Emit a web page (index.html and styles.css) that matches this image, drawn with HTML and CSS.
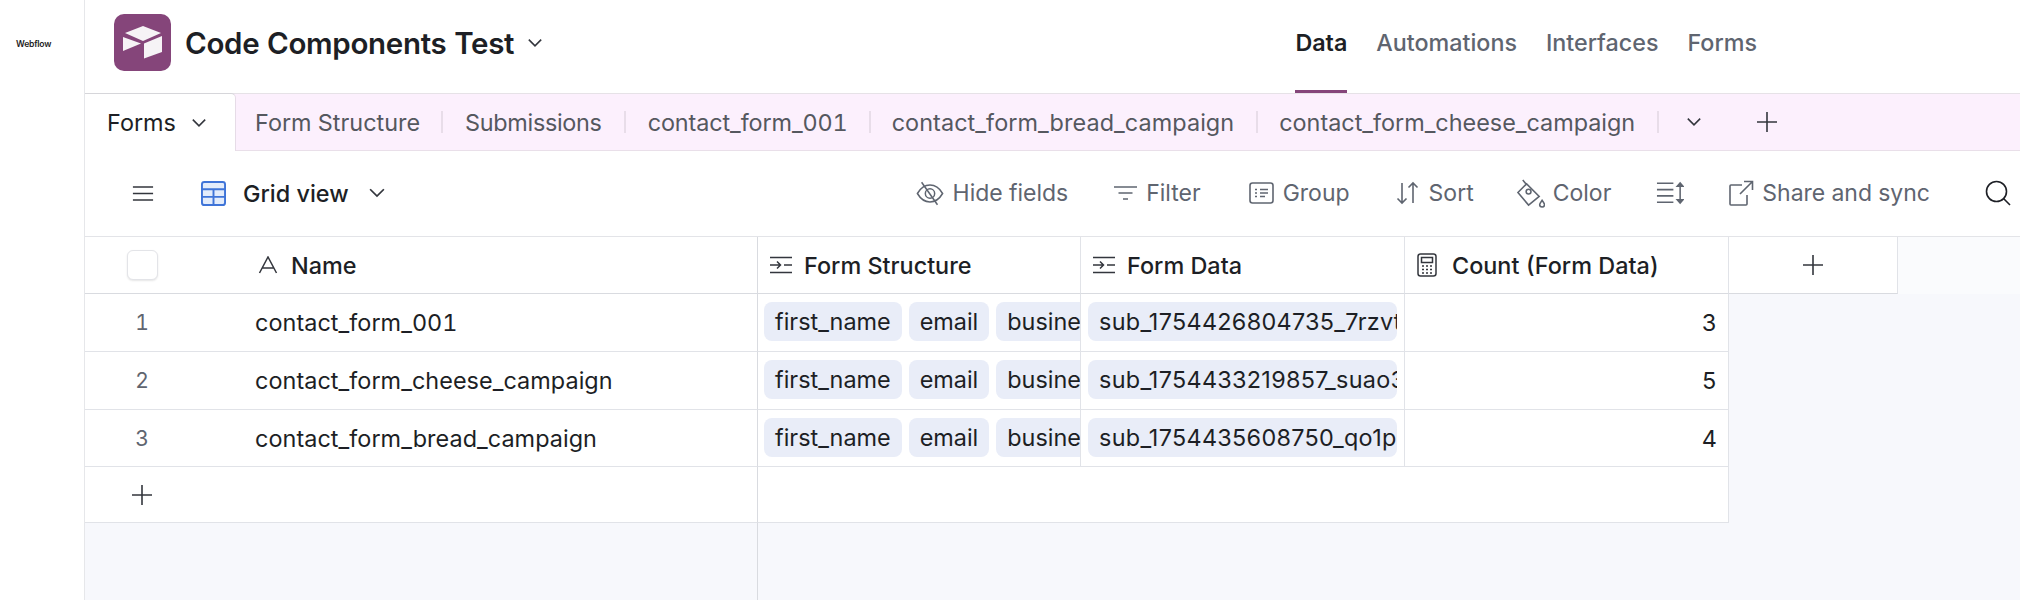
FILE: index.html
```html
<!DOCTYPE html>
<html lang="en">
<head>
<meta charset="utf-8">
<title>Code Components Test</title>
<link rel="stylesheet" href="styles.css">
</head>
<body>
<aside class="rail"><span class="rail-logo">Webflow</span></aside>
<main class="app">
  <header class="topbar">
    <div class="base">
      <svg class="base-tile" viewBox="0 0 57 57"><rect width="57" height="57" rx="10" fill="#85457a"/><path d="M11 19 29 12l18 7-18 8z" fill="#f6f3f6"/><path d="M9 23l18 6.500L9 37z" fill="#f6f3f6"/><path d="M30 29.500 48 22v16l-18 6.500z" fill="#f6f3f6"/></svg>
      <h1 class="base-name">Code Components Test</h1>
      <svg class="chev base-chev" viewBox="0 0 16 16"><path d="M2.500 5 8 10.500 13.500 5"/></svg>
    </div>
    <nav class="nav">
      <a class="nav-item is-active">Data</a>
      <a class="nav-item">Automations</a>
      <a class="nav-item">Interfaces</a>
      <a class="nav-item">Forms</a>
    </nav>
  </header>

  <div class="tabbar">
    <div class="tab-active">Forms<svg class="chev" viewBox="0 0 16 16"><path d="M2.500 5 8 10.500 13.500 5"/></svg></div>
    <div class="tab">Form Structure</div><i class="tab-sep"></i>
    <div class="tab tab-tight">Submissions</div><i class="tab-sep"></i>
    <div class="tab tab-short">contact_form_001</div><i class="tab-sep"></i>
    <div class="tab tab-bread">contact_form_bread_campaign</div><i class="tab-sep"></i>
    <div class="tab tab-cheese">contact_form_cheese_campaign</div><i class="tab-sep"></i>
    <svg class="chev tab-more" viewBox="0 0 16 16"><path d="M2.500 5 8 10.500 13.500 5"/></svg>
    <svg class="plus tab-plus" viewBox="0 0 22 22"><path d="M11 1v20M1 11h20"/></svg>
  </div>

  <div class="toolbar">
    <div class="tool-left">
      <svg class="ico ico-menu" viewBox="0 0 24 18"><path d="M1 2h22M1 9h22M1 16h22"/></svg>
      <svg class="ico-grid" viewBox="0 0 26 26"><rect x="1" y="1" width="24" height="24" rx="2.500" fill="#e3ecfb" stroke="#3f74d8" stroke-width="2"/><path d="M1 8.500h24M1 16.500h24M13 8.500V25" fill="none" stroke="#3f74d8" stroke-width="2"/></svg>
      <span class="view-name">Grid view</span>
      <svg class="chev view-chev" viewBox="0 0 16 16"><path d="M2.500 5 8 10.500 13.500 5"/></svg>
    </div>
    <div class="tool-right">
      <div class="tool"><svg class="ico" viewBox="0 0 30 26"><path d="M1.500 13C5 7 9.500 4 15 4s10 3 13.500 9C25 19 20.500 22 15 22S5 19 1.500 13z"/><circle cx="15" cy="13" r="5"/><path d="M6 1l17 24"/></svg><span>Hide fields</span></div>
      <div class="tool"><svg class="ico" viewBox="0 0 25 16"><path d="M1 2h23M5.500 8h14M10 14h5"/></svg><span>Filter</span></div>
      <div class="tool tool-group"><svg class="ico" viewBox="0 0 25 22"><rect x="1" y="1" width="23" height="20" rx="2.500"/><path d="M6 7.500h2M11 7.500h8M6 11h2M11 11h8M6 14.500h2M11 14.500h5"/></svg><span>Group</span></div>
      <div class="tool tool-sort"><svg class="ico" viewBox="0 0 25 24"><path d="M7 2v20M2.500 17.500 7 22l4.500-4.500M18 22V2M13.500 6.500 18 2l4.500 4.500"/></svg><span>Sort</span></div>
      <div class="tool tool-color"><svg class="ico" viewBox="0 0 30 30"><path d="M7 1l4 5M11 5 2 14l11 13 11-9z"/><circle cx="13" cy="13" r="2.500"/><path d="M27 22c-1.500 2-2.500 3.300-2.500 4.500a2.400 2.400 0 0 0 5 0C29.500 25.300 28.500 24 27 22z"/></svg><span>Color</span></div>
      <div class="tool"><svg class="ico" viewBox="0 0 29 24"><path d="M1 2h17M1 8.500h17M1 15h17M1 21.500h17M25 2v20"/><path d="M22 5l3-3.500L28 5zM22 19l3 3.500L28 19z" fill="#5f6570"/></svg></div>
      <div class="tool"><svg class="ico" viewBox="0 0 25 26"><path d="M13 5H2a1 1 0 0 0-1 1v18a1 1 0 0 0 1 1h15a1 1 0 0 0 1-1v-9M11 14 23 2M15 1.500h8.500V10"/></svg><span>Share and sync</span></div>
      <svg class="ico ico-search" viewBox="0 0 26 26"><circle cx="11.500" cy="11.500" r="10"/><path d="M18.500 18.500 25 25"/></svg>
    </div>
  </div>

  <section class="grid">
    <div class="cell head first">
      <span class="check-col"><i class="check"></i></span>
      <svg class="fico fico-a" viewBox="0 0 20 18"><path d="M1.500 17 10 1l8.500 16M4.500 12h11"/></svg><b class="hname">Name</b>
    </div>
    <div class="cell head col"><svg class="fico" viewBox="0 0 24 18"><path d="M1 1.500h22M1 16.500h22M1 9h10M8 5.500 11.500 9 8 12.500M15 9h8"/></svg><b class="hname">Form Structure</b></div>
    <div class="cell head col"><svg class="fico" viewBox="0 0 24 18"><path d="M1 1.500h22M1 16.500h22M1 9h10M8 5.500 11.500 9 8 12.500M15 9h8"/></svg><b class="hname">Form Data</b></div>
    <div class="cell head col"><svg class="fico fico-calc" viewBox="0 0 20 24"><rect x="1" y="1" width="18" height="22" rx="2.500"/><rect x="4.500" y="4.500" width="11" height="5"/><path d="M5 13h2M9 13h2M13 13h2M5 16.500h2M9 16.500h2M13 16.500h2M5 20h2M9 20h2M13 20h2"/></svg><b class="hname">Count (Form Data)</b></div>
    <div class="cell head add"><svg class="plus" viewBox="0 0 22 22"><path d="M11 1v20M1 11h20"/></svg></div>
    <div class="head-rest"></div>

    <div class="cell first"><span class="num">1</span><span class="name">contact_form_001</span></div>
    <div class="cell col pills"><span class="pill">first_name</span><span class="pill">email</span><span class="pill">business_name</span></div>
    <div class="cell col pills"><span class="pill pill-wide">sub_1754426804735_7rzvt9k2m</span></div>
    <div class="cell col count">3</div>

    <div class="cell first"><span class="num">2</span><span class="name">contact_form_cheese_campaign</span></div>
    <div class="cell col pills"><span class="pill">first_name</span><span class="pill">email</span><span class="pill">business_name</span></div>
    <div class="cell col pills"><span class="pill pill-wide">sub_1754433219857_suao3x1q</span></div>
    <div class="cell col count">5</div>

    <div class="cell first"><span class="num">3</span><span class="name">contact_form_bread_campaign</span></div>
    <div class="cell col pills"><span class="pill">first_name</span><span class="pill">email</span><span class="pill">business_name</span></div>
    <div class="cell col pills"><span class="pill pill-wide">sub_1754435608750_qo1p7h4z</span></div>
    <div class="cell col count">4</div>

    <div class="cell first"><span class="check-col"><svg class="plus" viewBox="0 0 22 22"><path d="M11 1v20M1 11h20"/></svg></span></div>
    <div class="cell add-rest"></div>

    <div class="filler"></div>
  </section>
</main>
</body>
</html>
```

FILE: styles.css
```css
* { box-sizing: border-box; }
html, body { margin: 0; height: 100%; }
body {
  display: flex;
  width: 2020px;
  height: 600px;
  overflow: hidden;
  background: #fff;
  color: #1d1f25;
  font-family: Inter, "Liberation Sans", sans-serif;
  font-size: 23.400px;
  font-variant-numeric: tabular-nums;
}
svg { display: block; flex: none; }

.rail {
  flex: none;
  width: 85px;
  height: 100%;
  padding: 38px 0 0 16px;
  border-right: 1px solid #e6e7ea;
}
.rail-logo { display: block; font-size: 8.600px; font-weight: 600; line-height: 12px; letter-spacing: -0.2px; color: #222; }

.app { flex: 1; min-width: 0; height: 100%; display: flex; flex-direction: column; }

.topbar { flex: none; height: 93px; display: flex; align-items: center; justify-content: space-between; padding-left: 29px; padding-right: 263px; }
.base { display: flex; align-items: center; padding-bottom: 8px; }
.base-tile { width: 57px; height: 57px; margin-right: 14px; }
.base-name { margin: 0; font-size: 29.500px; font-weight: 600; letter-spacing: -0.3px; white-space: nowrap; }
.base-chev { margin-left: 12px; width: 18px; height: 18px; stroke: #1d1f25; }

.chev { width: 18px; height: 18px; fill: none; stroke: #33363d; stroke-width: 1.400; }
.plus { width: 22px; height: 22px; fill: none; stroke: #33363d; stroke-width: 1.600; }

.nav { display: flex; gap: 29px; height: 93px; }
.nav-item { display: flex; align-items: center; height: 93px; padding-bottom: 6px; font-size: 23.300px; font-weight: 500; color: #5f6570; border-bottom: 3px solid transparent; }
.nav-item.is-active { color: #1d1f25; font-weight: 600; border-bottom-color: #85457a; }

.tabbar {
  flex: none;
  height: 58px;
  display: flex;
  align-items: center;
  background: #fcf0fd;
  border-top: 1px solid #e6e2e7;
  border-bottom: 1px solid #e9dfe9;
  color: #55585f;
}
.tab-active {
  align-self: stretch;
  width: 151px;
  margin: -1px 0 -1px 0;
  display: flex;
  align-items: center;
  gap: 14px;
  padding-left: 22px;
  background: #fff;
  color: #1d1f25;
  border-top: 1px solid #d6d6da;
  border-right: 1px solid #e6dce7;
  border-top-right-radius: 5px;
}
.tab { padding: 0 22px; white-space: nowrap; }
.tab-active + .tab { padding: 0 21px 0 19px; }
.tab-tight { letter-spacing: -0.3px; }
.tab-short { letter-spacing: -0.1px; padding-right: 21px; }
.tab-bread { letter-spacing: 0.08px; padding-left: 21px; }
.tab-cheese { padding-left: 21px; }
.tab-sep { width: 2px; height: 22px; background: #e8dde9; flex: none; }
.tab-more { margin-left: 26px; }
.tab-plus { margin-left: 53px; }

.toolbar {
  flex: none;
  height: 86px;
  display: flex;
  align-items: center;
  justify-content: space-between;
  padding: 0 9px 1px 47px;
  border-bottom: 1px solid #e3e4e8;
}
.tool-left { display: flex; align-items: center; }
.ico { fill: none; stroke: #5f6570; stroke-width: 1.600; }
.ico-menu { width: 22px; height: 17px; stroke: #33363d; margin-right: 47px; }
.ico-grid { width: 25px; height: 25px; margin-right: 17px; }
.view-name { font-weight: 500; margin-right: 18px; }
.view-chev { width: 20px; height: 20px; }
.tool-right { display: flex; align-items: center; gap: 45px; color: #5f6570; font-size: 23px; }
.tool { display: flex; align-items: center; gap: 8px; white-space: nowrap; }
.tool-group { gap: 9px; margin-left: 3px; }
.tool-sort { gap: 9px; }
.tool-color { margin-left: -3px; }
.tool:nth-child(1) { gap: 9px; }
.tool:nth-child(1) .ico { width: 28px; height: 25px; }
.tool:nth-child(2) .ico { width: 25px; height: 16px; }
.tool:nth-child(3) .ico { width: 25px; height: 22px; }
.tool:nth-child(4) .ico { width: 25px; height: 24px; }
.tool:nth-child(5) .ico { width: 29px; height: 29px; }
.tool:nth-child(6) .ico { width: 28px; height: 24px; }
.tool:nth-child(7) .ico { width: 25px; height: 26px; }
.ico-search { width: 26px; height: 26px; margin-left: 10px; stroke: #1d1f25; }

.grid {
  flex: 1;
  min-height: 0;
  display: grid;
  grid-template-columns: 673px 323px 324px 324px 169px 1fr;
  grid-template-rows: 57px 58px 58px 57px 56px 1fr;
  background: #f7f8fc;
}
.cell {
  display: flex;
  align-items: center;
  background: #fff;
  border-bottom: 1px solid #e1e3e8;
  min-width: 0;
  overflow: hidden;
}
.col { border-right: 1px solid #e1e3e8; }
.first { grid-column: 1; border-right: 1px solid #d9dbe0; }
.head { border-bottom-color: #d9dbe0; }
.head.col { padding-left: 11px; }
.add { grid-column: 5; justify-content: center; border-right: 1px solid #e1e3e8; }
.head-rest { background: #fafbfd; }
.add-rest { grid-column: 2 / 5; border-right: 1px solid #e1e3e8; }
.filler { grid-column: 1; grid-row: 6; border-right: 1px solid #d9dbe0; }

.check-col { width: 114px; flex: none; display: flex; justify-content: center; }
.check { display: block; width: 31px; height: 30px; background: #fff; border: 1px solid #e3e4e8; border-radius: 6px; box-shadow: 0 1px 2px rgba(0,0,0,.1); }
.fico { width: 24px; height: 18px; margin-right: 11px; fill: none; stroke: #33363d; stroke-width: 1.500; }
.fico-a { width: 20px; margin-left: 59px; margin-right: 13px; }
.fico-calc { width: 20px; height: 24px; }
.hname { font-weight: 500; font-size: 23.400px; white-space: nowrap; }
.head.col:nth-child(4) { padding-left: 12px; }
.head.col:nth-child(4) .fico { margin-right: 15px; }

.num { width: 114px; flex: none; text-align: center; color: #5f6570; font-size: 21px; }
.name { margin-left: 56px; white-space: nowrap; letter-spacing: 0.06px; }

.pills { padding: 0 6px 2px; gap: 7px; }
.pill {
  flex: none;
  height: 39px;
  display: flex;
  align-items: center;
  padding: 0 11px;
  background: #e9edf8;
  border-radius: 8px;
  white-space: nowrap;
  font-variant-numeric: normal;
}
.pill-wide { width: 309px; margin-left: 1px; overflow: hidden; padding-right: 0; letter-spacing: 0.3px; }
.count { justify-content: flex-end; padding-right: 11px; }
```
